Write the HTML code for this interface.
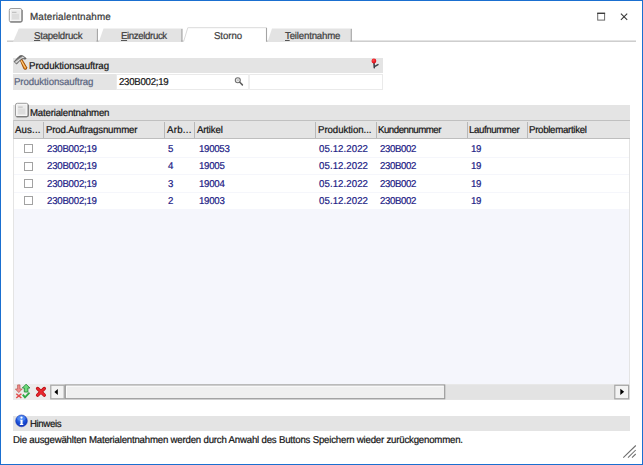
<!DOCTYPE html>
<html><head><meta charset="utf-8">
<style>
*{box-sizing:border-box;margin:0;padding:0}
html,body{width:643px;height:465px;overflow:hidden;background:#fff}
body{font-family:"Liberation Sans",sans-serif;text-rendering:geometricPrecision;font-size:10px;color:#151515;position:relative}
.abs{position:absolute}
#win{position:absolute;left:0;top:0;width:643px;height:465px;border:1px solid #1a6fd0;background:#fff}
.t{position:absolute;white-space:nowrap;line-height:normal;-webkit-text-stroke:0.22px currentColor}
u{text-decoration-thickness:0.8px;text-underline-offset:1px;text-decoration-color:#555}
.bar{position:absolute;background:#e4e4e4}
.dv{position:absolute;top:121.5px;width:1px;height:16.3px;background:#b8b8b8}
.dl{position:absolute;top:122px;width:1px;height:16px;background:#f3f3f3}
.rw{position:absolute;left:14px;width:615px;background:#fff}
.cb{position:absolute;left:24px;width:9px;height:9px;border:1px solid #a2a2a2;background:#fff}
</style></head><body>
<div id="win"></div>

<!-- title icon in overlay -->
<svg class="abs" style="left:590px;top:8px" width="45" height="18" viewBox="590 8 45 18">
<rect x="597.7" y="13.3" width="6.9" height="6.8" fill="none" stroke="#6a6a6a" stroke-width="1"/>
<rect x="597.2" y="12.7" width="7.9" height="1.3" fill="#3e3e3e"/>
<path d="M620.9 13.6 L627.2 19.9 M627.2 13.6 L620.9 19.9" stroke="#3a3a3a" stroke-width="1.1" fill="none"/>
</svg>

<!-- tabs -->
<svg class="abs" style="left:0;top:27px" width="643" height="16" viewBox="0 0 643 16">
<rect x="7" y="13.6" width="629" height="1.1" fill="#b9b9b9"/>
<path d="M13 15 L18.8 1.4 L96.4 1.4 L96.4 15 Z" fill="#e3e3e3"/>
<path d="M97.3 1.8 V14.6" stroke="#9e9e9e" stroke-width="1.2"/>
<path d="M98.8 15 L103.5 1.4 L181 1.4 L181 15 Z" fill="#e3e3e3"/>
<path d="M181.9 1.8 V14.6" stroke="#9e9e9e" stroke-width="1.2"/>
<path d="M183.3 15 L187.6 0.5 L266.5 0.5 L266.5 15 Z" fill="#fff"/>
<path d="M183.6 14.6 L187.8 0.7 L266 0.7" stroke="#dadada" stroke-width="1" fill="none"/>
<path d="M266.5 0.7 V14.7" stroke="#a4a4a4" stroke-width="1.1" fill="none"/>
<path d="M267.5 15 L272 1.4 L350.3 1.4 L350.3 15 Z" fill="#e3e3e3"/>
<path d="M351.2 1.8 V14.6" stroke="#9e9e9e" stroke-width="1.2"/>
</svg>

<!-- Produktionsauftrag section -->
<div class="bar" style="left:13px;top:57.500px;width:369.500px;height:15.500px"></div>
<div class="bar" style="left:13px;top:74px;width:102.500px;height:15.500px"></div>
<div class="abs" style="left:115.5px;top:73.5px;width:267px;height:16.3px;border:1px solid #eaeaea;background:#fff"></div>
<div class="abs" style="left:248px;top:73.5px;width:1.6px;height:16.3px;background:#eeeeee"></div>

<!-- Materialentnahmen -->
<div class="bar" style="left:13px;top:104.500px;width:617px;height:17px"></div>
<div class="abs" style="left:13px;top:121px;width:617px;height:263.500px;background:#f5f6fc;border-left:1px solid #e4e4e4;border-right:1px solid #e4e4e4"></div>
<div class="abs" style="left:13px;top:120.1px;width:617px;height:18.7px;background:#e4e4e4;border-top:1px solid #c0c0c0;border-bottom:1px solid #bebebe;border-left:1px solid #cdcdcd"></div>
<div class="dv" style="left:43.0px"></div><div class="dv" style="left:164.0px"></div><div class="dv" style="left:194.0px"></div><div class="dv" style="left:315.0px"></div><div class="dv" style="left:375.5px"></div><div class="dv" style="left:467.0px"></div><div class="dv" style="left:526.7px"></div>
<div class="rw" style="top:139.2px;height:69.6px"></div><div class="abs" style="left:14px;width:615px;top:156.8px;height:1px;background:#f5f6fb"></div><div class="abs" style="left:14px;width:615px;top:174.2px;height:1px;background:#f5f6fb"></div><div class="abs" style="left:14px;width:615px;top:191.6px;height:1px;background:#f5f6fb"></div><div class="cb" style="top:144.2px"></div><div class="cb" style="top:161.6px"></div><div class="cb" style="top:178.9px"></div><div class="cb" style="top:196.2px"></div>

<!-- bottom toolbar -->
<div class="abs" style="left:13px;top:384.300px;width:617px;height:15.500px;background:#ececec"></div>

<!-- Hinweis -->
<div class="bar" style="left:13px;top:415.500px;width:617px;height:15.200px"></div>
<div class="t" style="left:30.06px;top:11.57px;font-size:10.2px;letter-spacing:0.138px;color:#383838;transform:scaleX(0.965);transform-origin:0 0">Materialentnahme</div>
<div class="t" style="left:33.97px;top:30.55px;font-size:10.0px;letter-spacing:-0.259px;color:#3c3c3c;transform:scaleX(0.965);transform-origin:0 0"><u>S</u>tapeldruck</div>
<div class="t" style="left:120.67px;top:30.55px;font-size:10.0px;letter-spacing:-0.386px;color:#3c3c3c;transform:scaleX(0.965);transform-origin:0 0"><u>E</u>inzeldruck</div>
<div class="t" style="left:213.77px;top:30.55px;font-size:10.0px;letter-spacing:-0.076px;color:#3c3c3c;transform:scaleX(0.965);transform-origin:0 0">Storno</div>
<div class="t" style="left:284.97px;top:30.55px;font-size:10.0px;letter-spacing:-0.182px;color:#3c3c3c;transform:scaleX(0.965);transform-origin:0 0"><u>T</u>eilentnahme</div>
<div class="t" style="left:28.77px;top:61.15px;font-size:10.0px;letter-spacing:-0.058px;color:#151515;transform:scaleX(0.965);transform-origin:0 0">Produktionsauftrag</div>
<div class="t" style="left:14.47px;top:77.45px;font-size:10.0px;letter-spacing:-0.094px;color:#5a6480;transform:scaleX(0.965);transform-origin:0 0">Produktionsauftrag</div>
<div class="t" style="left:119.47px;top:77.45px;font-size:10.0px;letter-spacing:-0.276px;color:#151515;transform:scaleX(0.965);transform-origin:0 0">230B002;19</div>
<div class="t" style="left:29.87px;top:107.65px;font-size:10.0px;letter-spacing:-0.204px;color:#151515;transform:scaleX(0.965);transform-origin:0 0">Materialentnahmen</div>
<div class="t" style="left:15.47px;top:124.65px;font-size:10.0px;letter-spacing:0.163px;color:#151515;transform:scaleX(0.965);transform-origin:0 0">Aus...</div>
<div class="t" style="left:45.57px;top:124.65px;font-size:10.0px;letter-spacing:-0.169px;color:#151515;transform:scaleX(0.965);transform-origin:0 0">Prod.Auftragsnummer</div>
<div class="t" style="left:166.67px;top:124.65px;font-size:10.0px;letter-spacing:0.290px;color:#151515;transform:scaleX(0.965);transform-origin:0 0">Arb...</div>
<div class="t" style="left:196.77px;top:124.65px;font-size:10.0px;letter-spacing:-0.165px;color:#151515;transform:scaleX(0.965);transform-origin:0 0">Artikel</div>
<div class="t" style="left:317.97px;top:124.65px;font-size:10.0px;letter-spacing:-0.062px;color:#151515;transform:scaleX(0.965);transform-origin:0 0">Produktion...</div>
<div class="t" style="left:377.87px;top:124.65px;font-size:10.0px;letter-spacing:-0.490px;color:#151515;transform:scaleX(0.965);transform-origin:0 0">Kundennummer</div>
<div class="t" style="left:468.97px;top:124.65px;font-size:10.0px;letter-spacing:-0.404px;color:#151515;transform:scaleX(0.965);transform-origin:0 0">Laufnummer</div>
<div class="t" style="left:529.37px;top:124.65px;font-size:10.0px;letter-spacing:-0.296px;color:#151515;transform:scaleX(0.965);transform-origin:0 0">Problemartikel</div>
<div class="t" style="left:29.87px;top:418.65px;font-size:10.0px;letter-spacing:-0.401px;color:#151515;transform:scaleX(0.965);transform-origin:0 0">Hinweis</div>
<div class="t" style="left:12.77px;top:434.85px;font-size:10.0px;letter-spacing:-0.210px;color:#151515;transform:scaleX(0.965);transform-origin:0 0">Die ausgewählten Materialentnahmen werden durch Anwahl des Buttons Speichern wieder zurückgenommen.</div>
<div class="t" style="left:46.77px;top:144.05px;font-size:10.0px;letter-spacing:-0.241px;color:#1c1c86;transform:scaleX(0.965);transform-origin:0 0">230B002;19</div>
<div class="t" style="left:167.97px;top:144.05px;font-size:10.0px;letter-spacing:0.000px;color:#1c1c86;transform:scaleX(0.965);transform-origin:0 0">5</div>
<div class="t" style="left:198.57px;top:144.05px;font-size:10.0px;letter-spacing:-0.298px;color:#1c1c86;transform:scaleX(0.965);transform-origin:0 0">190053</div>
<div class="t" style="left:318.67px;top:144.05px;font-size:10.0px;letter-spacing:0.076px;color:#1c1c86;transform:scaleX(0.965);transform-origin:0 0">05.12.2022</div>
<div class="t" style="left:379.67px;top:144.05px;font-size:10.0px;letter-spacing:-0.376px;color:#1c1c86;transform:scaleX(0.965);transform-origin:0 0">230B002</div>
<div class="t" style="left:470.97px;top:144.05px;font-size:10.0px;letter-spacing:-0.380px;color:#1c1c86;transform:scaleX(0.965);transform-origin:0 0">19</div>
<div class="t" style="left:46.77px;top:161.45px;font-size:10.0px;letter-spacing:-0.241px;color:#1c1c86;transform:scaleX(0.965);transform-origin:0 0">230B002;19</div>
<div class="t" style="left:167.97px;top:161.45px;font-size:10.0px;letter-spacing:0.000px;color:#1c1c86;transform:scaleX(0.965);transform-origin:0 0">4</div>
<div class="t" style="left:198.57px;top:161.45px;font-size:10.0px;letter-spacing:-0.277px;color:#1c1c86;transform:scaleX(0.965);transform-origin:0 0">19005</div>
<div class="t" style="left:318.67px;top:161.45px;font-size:10.0px;letter-spacing:0.076px;color:#1c1c86;transform:scaleX(0.965);transform-origin:0 0">05.12.2022</div>
<div class="t" style="left:379.67px;top:161.45px;font-size:10.0px;letter-spacing:-0.376px;color:#1c1c86;transform:scaleX(0.965);transform-origin:0 0">230B002</div>
<div class="t" style="left:470.97px;top:161.45px;font-size:10.0px;letter-spacing:-0.380px;color:#1c1c86;transform:scaleX(0.965);transform-origin:0 0">19</div>
<div class="t" style="left:46.77px;top:178.85px;font-size:10.0px;letter-spacing:-0.241px;color:#1c1c86;transform:scaleX(0.965);transform-origin:0 0">230B002;19</div>
<div class="t" style="left:167.97px;top:178.85px;font-size:10.0px;letter-spacing:0.000px;color:#1c1c86;transform:scaleX(0.965);transform-origin:0 0">3</div>
<div class="t" style="left:198.57px;top:178.85px;font-size:10.0px;letter-spacing:-0.277px;color:#1c1c86;transform:scaleX(0.965);transform-origin:0 0">19004</div>
<div class="t" style="left:318.67px;top:178.85px;font-size:10.0px;letter-spacing:0.076px;color:#1c1c86;transform:scaleX(0.965);transform-origin:0 0">05.12.2022</div>
<div class="t" style="left:379.67px;top:178.85px;font-size:10.0px;letter-spacing:-0.376px;color:#1c1c86;transform:scaleX(0.965);transform-origin:0 0">230B002</div>
<div class="t" style="left:470.97px;top:178.85px;font-size:10.0px;letter-spacing:-0.380px;color:#1c1c86;transform:scaleX(0.965);transform-origin:0 0">19</div>
<div class="t" style="left:46.77px;top:195.85px;font-size:10.0px;letter-spacing:-0.241px;color:#1c1c86;transform:scaleX(0.965);transform-origin:0 0">230B002;19</div>
<div class="t" style="left:167.97px;top:195.85px;font-size:10.0px;letter-spacing:0.000px;color:#1c1c86;transform:scaleX(0.965);transform-origin:0 0">2</div>
<div class="t" style="left:198.57px;top:195.85px;font-size:10.0px;letter-spacing:-0.277px;color:#1c1c86;transform:scaleX(0.965);transform-origin:0 0">19003</div>
<div class="t" style="left:318.67px;top:195.85px;font-size:10.0px;letter-spacing:0.076px;color:#1c1c86;transform:scaleX(0.965);transform-origin:0 0">05.12.2022</div>
<div class="t" style="left:379.67px;top:195.85px;font-size:10.0px;letter-spacing:-0.376px;color:#1c1c86;transform:scaleX(0.965);transform-origin:0 0">230B002</div>
<div class="t" style="left:470.97px;top:195.85px;font-size:10.0px;letter-spacing:-0.380px;color:#1c1c86;transform:scaleX(0.965);transform-origin:0 0">19</div>

<svg class="abs" style="left:0;top:0;pointer-events:none" width="643" height="465" viewBox="0 0 643 465">
<defs>
<linearGradient id="hd" x1="0" y1="0" x2="1" y2="1"><stop offset="0.34" stop-color="#6a6a6a"/><stop offset="0.47" stop-color="#e8e8e8"/><stop offset="0.62" stop-color="#707070"/></linearGradient>
<radialGradient id="inf" cx="0.45" cy="0.3" r="0.75"><stop offset="0" stop-color="#4f8cf6"/><stop offset="0.55" stop-color="#1a50d8"/><stop offset="1" stop-color="#0a2bb0"/></radialGradient>
<radialGradient id="pin" cx="0.4" cy="0.35" r="0.7"><stop offset="0" stop-color="#ff4a4a"/><stop offset="1" stop-color="#d80010"/></radialGradient>

</defs>
<!-- title doc icon -->
<g transform="translate(8.8 8)">
<rect x="0.5" y="0.5" width="12.6" height="13.6" rx="1.8" fill="#f7f7f7" stroke="#9d9d9d"/>
<path d="M1.5 13.8 H12 Q13.3 13.8 13.3 12.5 V2" fill="none" stroke="#7e7e7e" stroke-width="1.2"/>
<rect x="2.2" y="2.2" width="9.2" height="10" fill="#ebebeb"/>
<rect x="3.2" y="3.8" width="4.5" height="1" fill="#b9b9b9"/>
<rect x="3.2" y="5.8" width="7" height="5.6" fill="#dddddd"/>
</g>
<!-- materialentnahmen doc icon -->
<g transform="translate(15 102.8)">
<rect x="0.5" y="0.5" width="12.6" height="13.6" rx="1.8" fill="#f7f7f7" stroke="#9d9d9d"/>
<path d="M1.5 13.8 H12 Q13.3 13.8 13.3 12.5 V2" fill="none" stroke="#7e7e7e" stroke-width="1.2"/>
<rect x="2.2" y="2.2" width="9.2" height="10" fill="#ebebeb"/>
<rect x="3.2" y="3.8" width="4.5" height="1" fill="#b9b9b9"/>
<rect x="3.2" y="5.8" width="7" height="5.6" fill="#dddddd"/>
</g>
<!-- hammer -->
<path d="M19.5 59.6 L21.7 58.3 L27.1 67.2 Q27.6 69.4 25.8 69.8 Q24 70 23.2 68.3 Z" fill="#96480a"/>
<path d="M20.4 60 L21.5 59.4 L26.3 67.4 Q26.6 68.8 25.6 69 Q24.5 69.1 24 68 Z" fill="#e98c20"/>
<path d="M21.2 60.7 L25.2 67.5" stroke="#fcd694" stroke-width="0.95" stroke-linecap="round"/>
<path d="M14.1 61.7 L19 56.4 Q20.7 55.2 22.6 55.8 Q24.9 56.7 26.1 58.7 L24.8 59.1 Q23.3 58.4 21.9 58.9 L20.5 59.9 L16.6 64 Z" fill="url(#hd)" stroke="#4c4c4c" stroke-width="0.8" stroke-linejoin="round"/>
<!-- pin -->
<path d="M374 63 L374.3 67.8" stroke="#3c4048" stroke-width="1.6" stroke-linecap="round"/>
<path d="M375.3 66.2 L378 64.6" stroke="#3c4048" stroke-width="1.4" stroke-linecap="round"/>
<circle cx="373.9" cy="61" r="2.4" fill="url(#pin)"/>
<!-- magnifier -->
<circle cx="237.8" cy="80.2" r="2.5" fill="#f0f0f0" stroke="#707070" stroke-width="1.1"/>
<rect x="236.8" y="79.3" width="2" height="1.8" fill="#c4c4c4"/>
<path d="M239.8 82.3 L242.4 84.9" stroke="#5c5c5c" stroke-width="1.5" stroke-linecap="round"/>
<!-- toolbar icons -->
<path d="M17.6 384.9 H20 V389 H22.2 L18.8 392.6 L15.4 389 H17.6 Z" fill="#f08e8e" stroke="#b8564e" stroke-width="0.7" stroke-linejoin="round"/>
<path d="M16.3 393.7 L21.4 398 M21.4 393.7 L16.3 398" stroke="#e24c4c" stroke-width="1.5"/>
<path d="M24.3 392 V388 H22.3 L26.1 384.2 L29.9 388 H27.9 V392 Z" fill="#6edb7c" stroke="#2c8a3e" stroke-width="0.9" stroke-linejoin="round"/>
<path d="M22.8 394.6 L25 397.3 L29.5 392.7" stroke="#2fa845" stroke-width="1.9" fill="none"/>
<path d="M37.6 388.5 L44.3 395.1 M44.3 388.5 L37.6 395.1" stroke="#b80c12" stroke-width="3.4" stroke-linecap="round"/>
<path d="M37.7 388.6 L44.2 395 M44.2 388.6 L37.7 395" stroke="#e8282e" stroke-width="2" stroke-linecap="round"/>
<!-- scrollbar -->
<rect x="50" y="384.5" width="580" height="15.3" fill="#e3e3e3"/>
<rect x="50.8" y="385.2" width="13.4" height="13.6" fill="#f3f3f3" stroke="#a6a6a6" stroke-width="1.2"/>
<path d="M57.8 388.9 V395.1 L54.4 392 Z" fill="#000"/>
<rect x="65.3" y="385" width="379.4" height="13.7" fill="#efefef" stroke="#9c9c9c" stroke-width="1.2"/>
<path d="M66.5 397.6 V386.2 H443.5" fill="none" stroke="#fff" stroke-width="0.8"/>
<rect x="614.8" y="385.3" width="13.8" height="13.5" fill="#f3f3f3" stroke="#a6a6a6" stroke-width="1.2"/>
<path d="M620.3 388.7 V395 L624.2 391.850 Z" fill="#000"/>
<!-- info -->
<circle cx="21.5" cy="420.9" r="6.3" fill="#f4f1ea"/>
<circle cx="21.5" cy="420.9" r="5.9" fill="url(#inf)" stroke="#0b2aa8" stroke-width="0.5"/>
<ellipse cx="21.3" cy="418.2" rx="4.2" ry="2.6" fill="#6fa4ff" opacity="0.45"/>
<circle cx="21.5" cy="417.6" r="1.15" fill="#fff"/>
<path d="M20.2 419.7 H22.6 V424 H23.3 V424.9 H19.8 V424 H20.5 V420.5 H20.2 Z" fill="#fff"/>
<!-- grip -->
<path d="M623.3 457.7 L635.8 445.5 M628 457.6 L635.7 450 M632 457.6 L635.7 454" stroke="#6e6e6e" stroke-width="1.05"/>
</svg>

</body></html>
